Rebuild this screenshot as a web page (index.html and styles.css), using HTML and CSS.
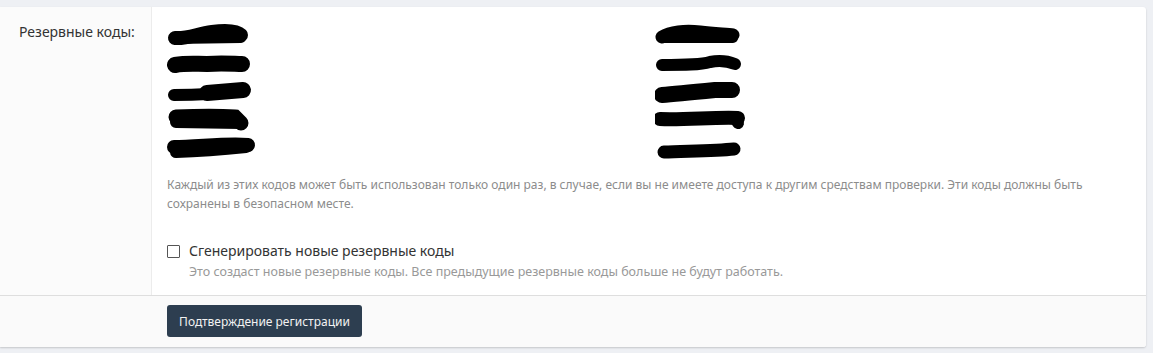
FILE: index.html
```html
<!DOCTYPE html>
<html lang="ru">
<head>
<meta charset="utf-8">
<title>Резервные коды</title>
<link rel="stylesheet" href="styles.css">
</head>
<body>
<div class="page">
  <form class="card">
    <div class="row">
      <div class="label-col"><span class="label">Резервные коды:</span></div>
      <div class="content-col">
        <div class="codes">
          <div class="code"><svg width="95" height="28" viewBox="0 0 95 28"><path d="M8 18 C 20 19, 30 14, 45 12 C 60 10, 70 11, 74 15" stroke="#000" stroke-width="14" stroke-linecap="round" fill="none"/><path d="M8 19 L 74 18" stroke="#000" stroke-width="10" stroke-linecap="round"/></svg></div>
          <div class="code"><svg width="95" height="28" viewBox="0 0 95 28"><path d="M8 17 C 20 15, 28 16, 40 16 C 55 15, 68 16, 75 16" stroke="#000" stroke-width="16" stroke-linecap="round" fill="none"/></svg></div>
          <div class="code"><svg width="95" height="28" viewBox="0 0 95 28"><path d="M7 19 C 30 19, 50 18, 70 15 L 77 15" stroke="#000" stroke-width="12" stroke-linecap="round" fill="none"/><path d="M40 17 L 76 14" stroke="#000" stroke-width="16" stroke-linecap="round"/></svg></div>
          <div class="code"><svg width="95" height="28" viewBox="0 0 95 28"><path d="M9 13 C 30 12, 55 12, 68 13 L 74 19" stroke="#000" stroke-width="15" stroke-linecap="round" fill="none"/><path d="M9 18 L 74 19" stroke="#000" stroke-width="12" stroke-linecap="round"/></svg></div>
          <div class="code"><svg width="95" height="28" viewBox="0 0 95 28"><path d="M7 15 C 30 15, 60 11, 81 13" stroke="#000" stroke-width="14" stroke-linecap="round" fill="none"/><path d="M9 20 C 40 19, 60 17, 79 15" stroke="#000" stroke-width="12" stroke-linecap="round" fill="none"/></svg></div>

          <div class="code"><svg width="95" height="28" viewBox="0 0 95 28"><path d="M7 17 C 15 12, 30 10, 45 12 C 60 14, 72 14, 78 15" stroke="#000" stroke-width="13" stroke-linecap="round" fill="none"/><path d="M7 18 L 78 18" stroke="#000" stroke-width="10" stroke-linecap="round"/></svg></div>
          <div class="code"><svg width="95" height="28" viewBox="0 0 95 28"><path d="M7 17 C 30 17, 45 17, 55 14 C 65 12, 75 14, 80 16" stroke="#000" stroke-width="12" stroke-linecap="round" fill="none"/></svg></div>
          <div class="code"><svg width="95" height="28" viewBox="0 0 95 28"><path d="M7 19 C 20 18, 40 16, 60 14 L 77 14" stroke="#000" stroke-width="16" stroke-linecap="round" fill="none"/></svg></div>
          <div class="code"><svg width="95" height="28" viewBox="0 0 95 28"><path d="M5 15 C 30 16, 60 13, 83 14" stroke="#000" stroke-width="14" stroke-linecap="round" fill="none"/><path d="M80 14 L 83 19" stroke="#000" stroke-width="12" stroke-linecap="round"/></svg></div>
          <div class="code"><svg width="95" height="28" viewBox="0 0 95 28"><path d="M9 20 C 30 19, 60 19, 79 17" stroke="#000" stroke-width="13" stroke-linecap="round" fill="none"/></svg></div>
        </div>
        <p class="explain">Каждый из этих кодов может быть использован только один раз, в случае, если вы не имеете доступа к другим средствам проверки. Эти коды должны быть сохранены в безопасном месте.</p>
        <label class="check">
          <span class="box"></span>
          <span class="check-text">Сгенерировать новые резервные коды</span>
        </label>
        <p class="hint">Это создаст новые резервные коды. Все предыдущие резервные коды больше не будут работать.</p>
      </div>
    </div>
    <div class="footer">
      <div class="footer-spacer"></div>
      <div class="footer-main"><button type="button" class="btn">Подтверждение регистрации</button></div>
    </div>
  </form>
</div>
</body>
</html>
```
FILE: styles.css
```css
* { box-sizing: border-box; }
html, body { margin: 0; padding: 0; }
body {
  background: #eef0f4;
  font-family: "Noto Sans", "Open Sans", sans-serif;
  color: #333;
}
.page {
  padding: 7px 7px 6px 0;
}
.card {
  background: #fff;
  border-radius: 0 3px 3px 0;
  box-shadow: 0 1px 2px rgba(0,0,0,0.18);
  width: 1146px;
  height: 340px;
  display: flex;
  flex-direction: column;
  overflow: hidden;
}
.row {
  display: flex;
  flex: 1;
}
.label-col {
  width: 152px;
  flex: none;
  background: #fbfbfb;
  border-right: 1px solid #ececec;
  padding: 13px 0 0 19px;
}
.label {
  font-size: 14px;
  line-height: 20px;
  color: #333;
}
.content-col {
  flex: 1;
  padding: 13px 15px 12px 15px;
}
.codes {
  display: grid;
  grid-template-columns: 488px 1fr;
  grid-auto-flow: column;
  grid-template-rows: repeat(5, 28px);
}
.code {
  height: 28px;
  display: flex;
  align-items: center;
}
.code svg { display: block; }
.explain {
  margin: 15px 0 0 0;
  font-size: 12px;
  line-height: 19px;
  color: #8c8c8c;
}
.check {
  margin-top: 28px;
  display: flex;
  align-items: center;
  height: 20px;
}
.box {
  width: 13px;
  height: 13px;
  border: 1px solid #555;
  border-radius: 1px;
  background: #fff;
  margin-right: 9px;
}
.check-text {
  font-size: 14px;
  line-height: 20px;
  color: #333;
}
.hint {
  margin: 2px 0 0 22px;
  font-size: 12.5px;
  line-height: 18px;
  color: #999;
}
.footer {
  flex: none;
  height: 52px;
  border-top: 1px solid #dedede;
  background: #fafafa;
  display: flex;
}
.footer-spacer { width: 152px; flex: none; }
.footer-main { padding: 9px 15px; }
.btn {
  height: 32px;
  width: 195px;
  border: none;
  border-radius: 3px;
  background: #2d3e50;
  color: #f2f2f2;
  font-family: "Noto Sans", "Open Sans", sans-serif;
  font-size: 12px;
  padding: 0;
}
```
